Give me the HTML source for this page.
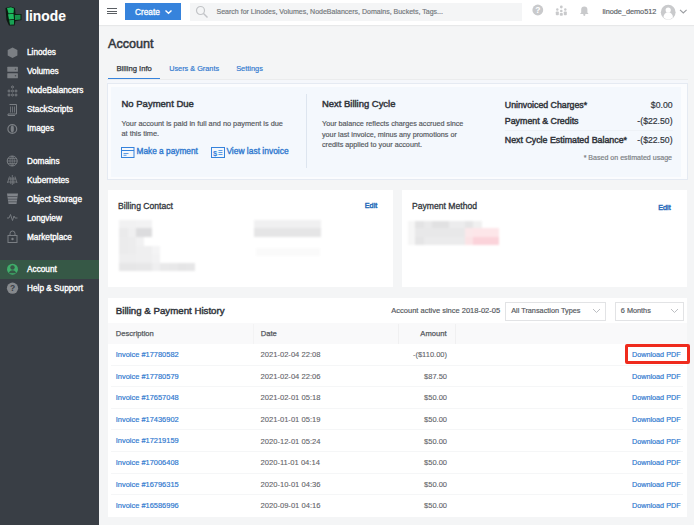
<!DOCTYPE html>
<html><head><meta charset="utf-8">
<style>
*{box-sizing:border-box;margin:0;padding:0}
html,body{width:694px;height:525px;overflow:hidden;background:#f4f5f6;font-family:"Liberation Sans",sans-serif;color:#32363c;position:relative}
.a{position:absolute}
.t{position:absolute;white-space:nowrap;line-height:1;-webkit-text-stroke-width:0.18px}
</style></head><body>
<!-- sidebar -->
<div class="a" style="left:0;top:0;width:99px;height:525px;background:#393e45"></div>
<svg class="a" style="left:0;top:0" width="24" height="28" viewBox="0 0 24 28">
  <path d="M5.5 8 L10.5 6.5 L15 8 L15.5 14 L21.5 14 L21.5 20 L15.5 21 L14.5 25.5 L9 25.5 L6.5 20 Z" fill="#0b1a10"/>
  <path d="M7 8 L11 7.2 L14 8.5 L13.5 13 L8.5 13.5 Z" fill="#1db35d"/>
  <path d="M8 14.2 L13.5 13.8 L14 19 L9 19.5 Z" fill="#1eb95f"/>
  <path d="M9.2 20.2 L14 19.8 L14 24.5 L10 24.8 Z" fill="#19a154"/>
  <path d="M14.8 15 L20.5 14.8 L20.5 19.5 L15 20 Z" fill="#168e4a"/>
</svg>
<div class="a" style="left:0;top:260px;width:99px;height:18.8px;background:#365846"></div>
<!-- sidebar icons -->
<svg class="a" style="left:0;top:40px" width="24" height="260" viewBox="0 40 24 260">
  <g fill="#7b7f84" stroke="none">
    <polygon points="12.5,47.5 17.4,50 17.4,55.5 12.5,58 7.7,55.5 7.7,50"/>
    <rect x="7.3" y="66.7" width="10.6" height="5" rx="0.5"/>
    <rect x="7.3" y="73.2" width="10.6" height="5" rx="0.5"/>
  </g>
  <g fill="#4a4e53"><circle cx="15.5" cy="69.2" r="0.8"/><circle cx="15.5" cy="75.7" r="0.8"/></g>
  <g fill="none" stroke="#7b7f84" stroke-width="1">
    <!-- nodebalancers -->
    <circle cx="12.5" cy="87" r="1"/><circle cx="9" cy="91" r="1"/><circle cx="12.5" cy="91" r="1"/><circle cx="16" cy="91" r="1"/>
    <circle cx="9" cy="95" r="1"/><circle cx="12.5" cy="95" r="1"/><circle cx="16" cy="95" r="1"/>
    <!-- stackscripts -->
    <path d="M9.5 104.5 h7 v9.5 h-8.5 v1.5 h7" />
    <path d="M10.5 106.5 v6 M12.5 106.5 v6 M14.5 106.5 v6" stroke-width="0.8"/>
    <!-- images -->
    <circle cx="12.3" cy="129" r="4.4" stroke-width="1.2"/>
    <ellipse cx="12.3" cy="129" rx="1.6" ry="3.4" fill="#7b7f84" stroke="none"/>
    <!-- domains -->
    <circle cx="12.2" cy="161" r="5"/>
    <path d="M7.2 161 h10 M12.2 156 v10 M8 158.5 h8.4 M8 163.5 h8.4" stroke-width="0.7"/>
    <path d="M12.2 156 c-3 3 -3 7 0 10 M12.2 156 c3 3 3 7 0 10" stroke-width="0.7"/>
    <!-- kubernetes -->
    <path d="M12.3 175 v10 M9.5 176.5 l-2 6.5 M15 176.5 l2 6.5 M8.5 179 h7.6 M7.5 182 h9.6 M10.8 177 v7 M13.8 177 v7" stroke-width="0.8"/>
    <!-- longview -->
    <path d="M7 218 h2 l1.5 -3.5 l2 6 l1.5 -4.5 l1 2 h2.5" stroke-width="0.9"/>
    <!-- marketplace -->
    <rect x="8" y="235.5" width="9" height="7" />
    <path d="M10 235.5 v-2 a2.5 2.5 0 0 1 5 0 v2"/>
  </g>
  <path d="M7 193.5 h11 l-1.5 10.5 h-8 z" fill="#80848a"/><path d="M7.5 196.5 h10 M7.8 199.2 h9.4 M8.2 201.8 h8.6" stroke="#393e45" stroke-width="0.6"/>
  <circle cx="12.5" cy="239" r="1.2" fill="#7b7f84"/>
  <!-- account -->
  <circle cx="12.5" cy="269.2" r="5.5" fill="#3fae6a"/>
  <circle cx="12.5" cy="267.5" r="2.2" fill="#365846"/>
  <path d="M8.8 273.2 a3.8 3.8 0 0 1 7.4 0 z" fill="#365846"/>
  <!-- help -->
  <circle cx="12.5" cy="288.2" r="5.6" fill="#86898d"/>
  <text x="12.5" y="291.4" font-size="8.5" font-weight="bold" text-anchor="middle" fill="#393e45" font-family="Liberation Sans">?</text>
</svg>

<!-- header -->
<div class="a" style="left:99px;top:0;width:595px;height:25px;background:#fff;box-shadow:0 1px 1px rgba(0,0,0,0.05)"></div>
<div class="a" style="left:107px;top:8px;width:10px;height:1.3px;background:#5a5e63"></div>
<div class="a" style="left:107px;top:10.6px;width:10px;height:1.3px;background:#5a5e63"></div>
<div class="a" style="left:107px;top:13.2px;width:10px;height:1.3px;background:#5a5e63"></div>
<div class="a" style="left:124.6px;top:3px;width:56.4px;height:17.3px;background:#3683dc"></div>
<svg class="a" style="left:164px;top:9px" width="9" height="6" viewBox="0 0 9 6"><path d="M1.5 1.5 L4.5 4.3 L7.5 1.5" fill="none" stroke="#fff" stroke-width="1.4"/></svg>
<div class="a" style="left:190px;top:3px;width:332px;height:18px;background:#f4f5f6"></div>
<svg class="a" style="left:195px;top:5px" width="14" height="14" viewBox="0 0 14 14"><circle cx="5.5" cy="5.5" r="4" fill="none" stroke="#c2c4c7" stroke-width="1.2"/><path d="M8.5 8.5 L12.5 12.5" stroke="#c2c4c7" stroke-width="1.4"/></svg>
<!-- header right icons -->
<svg class="a" style="left:528px;top:3px" width="166" height="20" viewBox="528 3 166 20">
  <circle cx="537.8" cy="10" r="5.4" fill="#c9cacc"/>
  <text x="537.9" y="13.2" font-size="8.5" font-weight="bold" text-anchor="middle" fill="#fff" font-family="Liberation Sans">?</text>
  <g fill="#c9cacc">
    <circle cx="561.3" cy="7" r="1.4"/>
    <circle cx="557.3" cy="9.5" r="1.2"/><circle cx="565.3" cy="9.5" r="1.2"/>
    <circle cx="561.3" cy="11" r="1.3"/>
    <rect x="555.8" y="11.5" width="3" height="3.8" rx="0.8"/><rect x="563.8" y="11.5" width="3" height="3.8" rx="0.8"/>
    <rect x="559.8" y="13" width="3" height="2.8" rx="0.8"/>
    <path d="M580 14 h8.6 l-1.2 -1.5 v-3 a3.1 3.1 0 0 0 -6.2 0 v3 z"/>
    <circle cx="584.3" cy="14.8" r="1.1"/>
  </g>
  <circle cx="668.2" cy="12.2" r="7.4" fill="#c9cacc"/>
  <circle cx="668.2" cy="10" r="2.6" fill="#fff"/>
  <path d="M663.5 17 a4.7 4.7 0 0 1 9.4 0 v0.5 a7.4 7.4 0 0 1 -9.4 0 z" fill="#fff"/>
  <path d="M680 9.8 L683.3 13 L686.6 9.8" fill="none" stroke="#9a9da1" stroke-width="1.1"/>
</svg>

<!-- tabs underline -->
<div class="a" style="left:108px;top:77.8px;width:52px;height:2px;background:#3683dc"></div>
<div class="a" style="left:107px;top:79px;width:581px;height:1px;background:#ebeced"></div><div class="a" style="left:107px;top:80px;width:581px;height:3px;background:#f5f7fb"></div>

<!-- summary panel -->
<div class="a" style="left:107px;top:83.2px;width:580.5px;height:96.8px;background:#fbfcfe;border:1.4px solid #e5eaf2"></div>
<div class="a" style="left:110.8px;top:87px;width:570.7px;height:90px;background:#f4f8fd"></div>
<div class="a" style="left:305.5px;top:94px;width:1px;height:74px;background:#dde5ef"></div>
<div class="a" style="left:505px;top:129.5px;width:168px;height:1px;background:#eef2f7"></div>
<svg class="a" style="left:120px;top:146px" width="16" height="13" viewBox="0 0 16 13">
  <rect x="1.5" y="1.5" width="12.5" height="10" fill="none" stroke="#3683dc" stroke-width="1"/>
  <path d="M1.5 4.5 h12.5" stroke="#3683dc" stroke-width="1"/>
  <path d="M3.5 7.5 h5 M3.5 9.3 h3" stroke="#3683dc" stroke-width="0.8"/>
</svg>
<svg class="a" style="left:210px;top:146px" width="16" height="13" viewBox="0 0 16 13">
  <rect x="1.5" y="1.5" width="13" height="10" fill="none" stroke="#3683dc" stroke-width="1"/>
  <text x="5" y="9.8" font-size="7.5" font-weight="bold" text-anchor="middle" fill="#3683dc" font-family="Liberation Sans">$</text>
  <path d="M8.5 4.5 h4 M8.5 6.5 h4 M8.5 8.5 h4" stroke="#3683dc" stroke-width="0.8"/>
</svg>

<!-- contact / payment panels -->
<div class="a" style="left:107.5px;top:190px;width:285.5px;height:96.5px;background:#fff"></div>
<div class="a" style="left:401.5px;top:190px;width:285.5px;height:96.5px;background:#fff"></div>
<!-- blurred contact -->
<div class="a" style="left:0;top:0;width:694px;height:525px;filter:blur(0.9px)">
<div class="a" style="left:118.5px;top:219.8px;width:9.9px;height:8.7px;background:#f1f1f2"></div>
<div class="a" style="left:128.2px;top:219.8px;width:8.0px;height:8.7px;background:#f1f1f2"></div>
<div class="a" style="left:136.0px;top:219.8px;width:8.0px;height:8.7px;background:#f2f2f3"></div>
<div class="a" style="left:143.8px;top:219.8px;width:8.6px;height:8.7px;background:#f2f2f3"></div>
<div class="a" style="left:118.5px;top:228.3px;width:9.9px;height:8.6px;background:#eaeaeb"></div>
<div class="a" style="left:128.2px;top:228.3px;width:8.0px;height:8.6px;background:#efeff0"></div>
<div class="a" style="left:136.0px;top:228.3px;width:8.0px;height:8.6px;background:#dcdcde"></div>
<div class="a" style="left:143.8px;top:228.3px;width:8.6px;height:8.6px;background:#dcdcde"></div>
<div class="a" style="left:118.5px;top:236.7px;width:9.9px;height:9.3px;background:#ebebec"></div>
<div class="a" style="left:128.2px;top:236.7px;width:8.0px;height:9.3px;background:#ececed"></div>
<div class="a" style="left:136.0px;top:236.7px;width:8.0px;height:9.3px;background:#f1f1f2"></div>
<div class="a" style="left:118.5px;top:245.8px;width:9.9px;height:8.6px;background:#ebebec"></div>
<div class="a" style="left:128.2px;top:245.8px;width:8.0px;height:8.6px;background:#ececed"></div>
<div class="a" style="left:136.0px;top:245.8px;width:8.0px;height:8.6px;background:#efeff0"></div>
<div class="a" style="left:143.8px;top:245.8px;width:8.6px;height:8.6px;background:#efeff0"></div>
<div class="a" style="left:152.2px;top:245.8px;width:8.0px;height:8.6px;background:#f4f4f5"></div>
<div class="a" style="left:118.5px;top:254.2px;width:9.9px;height:8.6px;background:#eeeeef"></div>
<div class="a" style="left:128.2px;top:254.2px;width:8.0px;height:8.6px;background:#eeeeef"></div>
<div class="a" style="left:136.0px;top:254.2px;width:8.0px;height:8.6px;background:#efeff0"></div>
<div class="a" style="left:143.8px;top:254.2px;width:8.6px;height:8.6px;background:#efeff0"></div>
<div class="a" style="left:152.2px;top:254.2px;width:8.0px;height:8.6px;background:#f2f2f3"></div>
<div class="a" style="left:118.5px;top:262.6px;width:9.9px;height:8.6px;background:#e6e6e7"></div>
<div class="a" style="left:128.2px;top:262.6px;width:8.0px;height:8.6px;background:#e6e6e7"></div>
<div class="a" style="left:136.0px;top:262.6px;width:8.0px;height:8.6px;background:#e7e7e8"></div>
<div class="a" style="left:143.8px;top:262.6px;width:8.6px;height:8.6px;background:#e7e7e8"></div>
<div class="a" style="left:152.2px;top:262.6px;width:8.0px;height:8.6px;background:#efeff0"></div>
<div class="a" style="left:160.0px;top:262.6px;width:9.2px;height:8.6px;background:#e9e9ea"></div>
<div class="a" style="left:169.0px;top:262.6px;width:8.7px;height:8.6px;background:#e8e8e9"></div>
<div class="a" style="left:177.5px;top:262.6px;width:8.7px;height:8.6px;background:#e5e5e6"></div>
<div class="a" style="left:186.0px;top:262.6px;width:9.2px;height:8.6px;background:#e6e6e7"></div>
<div class="a" style="left:254.4px;top:219.8px;width:67.0px;height:8.7px;background:#f0f0f1"></div>
<div class="a" style="left:254.4px;top:228.3px;width:67.0px;height:9.2px;background:#e5e5e6"></div>
<div class="a" style="left:256.4px;top:248.4px;width:63.8px;height:7.3px;background:#fafafa"></div>
<div class="a" style="left:408.0px;top:220.5px;width:7.0px;height:8.1px;background:#f6f6f6"></div>
<div class="a" style="left:414.8px;top:220.5px;width:8.9px;height:8.1px;background:#e3e3e4"></div>
<div class="a" style="left:423.5px;top:220.5px;width:8.7px;height:8.1px;background:#e9e9ea"></div>
<div class="a" style="left:432.0px;top:220.5px;width:8.2px;height:8.1px;background:#e1e1e2"></div>
<div class="a" style="left:440.0px;top:220.5px;width:8.9px;height:8.1px;background:#e1e1e2"></div>
<div class="a" style="left:448.7px;top:220.5px;width:8.8px;height:8.1px;background:#ececed"></div>
<div class="a" style="left:457.3px;top:220.5px;width:7.4px;height:8.1px;background:#ececed"></div>
<div class="a" style="left:464.5px;top:220.5px;width:8.9px;height:8.1px;background:#e5e5e6"></div>
<div class="a" style="left:473.2px;top:220.5px;width:8.8px;height:8.1px;background:#f0f0f0"></div>
<div class="a" style="left:408.0px;top:228.4px;width:7.0px;height:8.8px;background:#f6f6f6"></div>
<div class="a" style="left:414.8px;top:228.4px;width:8.9px;height:8.8px;background:#e8e8e9"></div>
<div class="a" style="left:423.5px;top:228.4px;width:8.7px;height:8.8px;background:#e8e8e9"></div>
<div class="a" style="left:432.0px;top:228.4px;width:8.2px;height:8.8px;background:#e8e8e9"></div>
<div class="a" style="left:440.0px;top:228.4px;width:8.9px;height:8.8px;background:#e8e8e9"></div>
<div class="a" style="left:448.7px;top:228.4px;width:8.8px;height:8.8px;background:#e8e8e9"></div>
<div class="a" style="left:457.3px;top:228.4px;width:7.4px;height:8.8px;background:#e8e8e9"></div>
<div class="a" style="left:464.5px;top:228.4px;width:8.9px;height:8.8px;background:#fbe8ea"></div>
<div class="a" style="left:473.2px;top:228.4px;width:8.8px;height:8.8px;background:#fde6e9"></div>
<div class="a" style="left:481.8px;top:228.4px;width:8.9px;height:8.8px;background:#fde6e9"></div>
<div class="a" style="left:490.5px;top:228.4px;width:8.2px;height:8.8px;background:#fde6e9"></div>
<div class="a" style="left:408.0px;top:237.0px;width:7.0px;height:8.2px;background:#f6f6f6"></div>
<div class="a" style="left:414.8px;top:237.0px;width:8.9px;height:8.2px;background:#e5e5e6"></div>
<div class="a" style="left:423.5px;top:237.0px;width:8.7px;height:8.2px;background:#ebebec"></div>
<div class="a" style="left:432.0px;top:237.0px;width:8.2px;height:8.2px;background:#ebebec"></div>
<div class="a" style="left:440.0px;top:237.0px;width:8.9px;height:8.2px;background:#ebebec"></div>
<div class="a" style="left:448.7px;top:237.0px;width:8.8px;height:8.2px;background:#ebebec"></div>
<div class="a" style="left:457.3px;top:237.0px;width:7.4px;height:8.2px;background:#ebebec"></div>
<div class="a" style="left:464.5px;top:237.0px;width:8.9px;height:8.2px;background:#fbe3e6"></div>
<div class="a" style="left:473.2px;top:237.0px;width:8.8px;height:8.2px;background:#fbd3da"></div>
<div class="a" style="left:481.8px;top:237.0px;width:8.9px;height:8.2px;background:#fbd3da"></div>
<div class="a" style="left:490.5px;top:237.0px;width:8.2px;height:8.2px;background:#fbd3da"></div>
</div>

<!-- history panel -->
<div class="a" style="left:107.5px;top:298px;width:579.5px;height:218.5px;background:#fff"></div>
<div class="a" style="left:505px;top:302px;width:101px;height:18.5px;border:1px solid #e2e3e5;background:#fff"></div>
<div class="a" style="left:615px;top:302px;width:69px;height:18.5px;border:1px solid #e2e3e5;background:#fff"></div>
<svg class="a" style="left:592px;top:307px" width="10" height="8" viewBox="0 0 10 8"><path d="M1 2 L4.5 5.5 L8 2" fill="none" stroke="#bcbec2" stroke-width="1"/></svg>
<svg class="a" style="left:669.5px;top:307px" width="10" height="8" viewBox="0 0 10 8"><path d="M1 2 L4.5 5.5 L8 2" fill="none" stroke="#bcbec2" stroke-width="1"/></svg>
<div class="a" style="left:107.5px;top:322.8px;width:579.5px;height:20.8px;background:#f9f9fa"></div>
<div class="a" style="left:252.5px;top:323.7px;width:1px;height:20px;background:#f3f3f4"></div>
<div class="a" style="left:397.5px;top:323.7px;width:1px;height:20px;background:#f0f0f1"></div>
<div class="a" style="left:455px;top:323.7px;width:1px;height:20px;background:#f0f0f1"></div>
<div class="a" style="left:111px;top:364.70px;width:572px;height:1px;background:#f5f6f7"></div><div class="a" style="left:111px;top:386.27px;width:572px;height:1px;background:#f5f6f7"></div><div class="a" style="left:111px;top:407.84px;width:572px;height:1px;background:#f5f6f7"></div><div class="a" style="left:111px;top:429.41px;width:572px;height:1px;background:#f5f6f7"></div><div class="a" style="left:111px;top:450.98px;width:572px;height:1px;background:#f5f6f7"></div><div class="a" style="left:111px;top:472.55px;width:572px;height:1px;background:#f5f6f7"></div><div class="a" style="left:111px;top:494.12px;width:572px;height:1px;background:#f5f6f7"></div><div class="a" style="left:625px;top:344.2px;width:64.5px;height:20px;border:3.4px solid #ef2b1d;border-radius:2px"></div>

<div class="t" style="top:9.62px;font-size:13.8px;color:#ffffff;font-weight:bold;left:25.20px;-webkit-text-stroke:0.1px #fff;">linode</div>
<div class="t" style="top:49.22px;font-size:8.25px;color:#ffffff;left:27.00px;-webkit-text-stroke:0.35px #fff;">Linodes</div>
<div class="t" style="top:68.32px;font-size:8.25px;color:#ffffff;left:27.00px;-webkit-text-stroke:0.35px #fff;">Volumes</div>
<div class="t" style="top:87.32px;font-size:8.25px;color:#ffffff;left:27.00px;-webkit-text-stroke:0.35px #fff;">NodeBalancers</div>
<div class="t" style="top:106.42px;font-size:8.25px;color:#ffffff;left:27.00px;-webkit-text-stroke:0.35px #fff;">StackScripts</div>
<div class="t" style="top:125.42px;font-size:8.25px;color:#ffffff;left:27.00px;-webkit-text-stroke:0.35px #fff;">Images</div>
<div class="t" style="top:157.52px;font-size:8.25px;color:#ffffff;left:27.00px;-webkit-text-stroke:0.35px #fff;">Domains</div>
<div class="t" style="top:176.52px;font-size:8.25px;color:#ffffff;left:27.00px;-webkit-text-stroke:0.35px #fff;">Kubernetes</div>
<div class="t" style="top:195.62px;font-size:8.25px;color:#ffffff;left:27.00px;-webkit-text-stroke:0.35px #fff;">Object Storage</div>
<div class="t" style="top:214.62px;font-size:8.25px;color:#ffffff;left:27.00px;-webkit-text-stroke:0.35px #fff;">Longview</div>
<div class="t" style="top:233.72px;font-size:8.25px;color:#ffffff;left:27.00px;-webkit-text-stroke:0.35px #fff;">Marketplace</div>
<div class="t" style="top:265.62px;font-size:8.25px;color:#ffffff;left:27.00px;-webkit-text-stroke:0.35px #fff;">Account</div>
<div class="t" style="top:284.82px;font-size:8.25px;color:#ffffff;left:27.00px;-webkit-text-stroke:0.35px #fff;">Help &amp; Support</div>
<div class="t" style="top:7.57px;font-size:8.3px;color:#ffffff;left:135.00px;-webkit-text-stroke:0.3px #fff;">Create</div>
<div class="t" style="top:7.95px;font-size:7.03px;color:#75797d;left:216.50px;">Search for Linodes, Volumes, NodeBalancers, Domains, Buckets, Tags...</div>
<div class="t" style="top:8.42px;font-size:7.3px;color:#606469;left:602.40px;">linode_demo512</div>
<div class="t" style="top:37.93px;font-size:12.6px;color:#32363c;left:108.00px;-webkit-text-stroke:0.5px #32363c;">Account</div>
<div class="t" style="top:64.72px;font-size:7.65px;color:#32363c;left:116.50px;-webkit-text-stroke:0.25px #32363c;">Billing Info</div>
<div class="t" style="top:64.82px;font-size:7.3px;color:#3079cf;left:169.20px;">Users &amp; Grants</div>
<div class="t" style="top:65.04px;font-size:7.4px;color:#3079cf;left:236.20px;">Settings</div>
<div class="t" style="top:99.26px;font-size:9.5px;color:#32363c;left:121.50px;-webkit-text-stroke:0.45px #32363c;">No Payment Due</div>
<div class="t" style="top:119.78px;font-size:7.35px;color:#55595e;left:121.50px;">Your account is paid in full and no payment is due</div>
<div class="t" style="top:130.48px;font-size:7.35px;color:#55595e;left:121.50px;">at this time.</div>
<div class="t" style="top:147.37px;font-size:8.3px;color:#3079cf;left:136.50px;-webkit-text-stroke:0.35px #3079cf;">Make a payment</div>
<div class="t" style="top:147.25px;font-size:8.45px;color:#3079cf;left:226.40px;-webkit-text-stroke:0.35px #3079cf;">View last invoice</div>
<div class="t" style="top:99.30px;font-size:9.45px;color:#32363c;left:322.00px;-webkit-text-stroke:0.45px #32363c;">Next Billing Cycle</div>
<div class="t" style="top:119.69px;font-size:7.22px;color:#55595e;left:322.00px;">Your balance reflects charges accrued since</div>
<div class="t" style="top:130.59px;font-size:7.22px;color:#55595e;left:322.00px;">your last invoice, minus any promotions or</div>
<div class="t" style="top:140.89px;font-size:7.22px;color:#55595e;left:322.00px;">credits applied to your account.</div>
<div class="t" style="top:100.88px;font-size:8.77px;color:#32363c;left:504.80px;-webkit-text-stroke:0.45px #32363c;">Uninvoiced Charges*</div>
<div class="t" style="top:116.90px;font-size:8.86px;color:#32363c;left:504.80px;-webkit-text-stroke:0.45px #32363c;">Payment &amp; Credits</div>
<div class="t" style="top:135.93px;font-size:8.83px;color:#32363c;left:504.80px;-webkit-text-stroke:0.45px #32363c;">Next Cycle Estimated Balance*</div>
<div class="t" style="top:100.94px;font-size:8.7px;color:#32363c;right:21.40px;">$0.00</div>
<div class="t" style="top:117.04px;font-size:8.7px;color:#32363c;right:21.40px;">-($22.50)</div>
<div class="t" style="top:136.04px;font-size:8.7px;color:#32363c;right:21.40px;">-($22.50)</div>
<div class="t" style="top:154.22px;font-size:7.07px;color:#7b7f84;right:22.00px;">* Based on estimated usage</div>
<div class="t" style="top:202.22px;font-size:8.6px;color:#32363c;left:118.00px;-webkit-text-stroke:0.3px #32363c;">Billing Contact</div>
<div class="t" style="top:201.82px;font-size:7.3px;color:#2a6dba;right:316.70px;-webkit-text-stroke:0.45px #2a6dba;">Edit</div>
<div class="t" style="top:202.22px;font-size:8.6px;color:#32363c;left:412.00px;-webkit-text-stroke:0.3px #32363c;">Payment Method</div>
<div class="t" style="top:203.52px;font-size:7.3px;color:#2a6dba;right:23.30px;-webkit-text-stroke:0.45px #2a6dba;">Edit</div>
<div class="t" style="top:305.99px;font-size:9.7px;color:#32363c;left:115.80px;-webkit-text-stroke:0.45px #32363c;">Billing &amp; Payment History</div>
<div class="t" style="top:307.15px;font-size:7.5px;color:#55595e;left:391.30px;">Account active since 2018-02-05</div>
<div class="t" style="top:307.22px;font-size:7.3px;color:#55595e;left:511.20px;">All Transaction Types</div>
<div class="t" style="top:307.22px;font-size:7.3px;color:#55595e;left:620.80px;">6 Months</div>
<div class="t" style="top:329.77px;font-size:7.6px;color:#55595e;left:115.80px;-webkit-text-stroke-width:0.25px;">Description</div>
<div class="t" style="top:329.77px;font-size:7.6px;color:#55595e;left:260.80px;-webkit-text-stroke-width:0.25px;">Date</div>
<div class="t" style="top:329.77px;font-size:7.6px;color:#55595e;right:247.50px;-webkit-text-stroke-width:0.25px;">Amount</div>
<div class="t" style="top:351.09px;font-size:7.45px;color:#3079cf;left:115.80px;">Invoice #17780582</div>
<div class="t" style="top:351.27px;font-size:7.6px;color:#5f6368;left:260.50px;-webkit-text-stroke-width:0.1px;">2021-02-04 22:08</div>
<div class="t" style="top:351.35px;font-size:7.5px;color:#5f6368;right:247.00px;-webkit-text-stroke-width:0.1px;">-($110.00)</div>
<div class="t" style="top:351.27px;font-size:7.24px;color:#3079cf;right:13.40px;">Download PDF</div>
<div class="t" style="top:372.66px;font-size:7.45px;color:#3079cf;left:115.80px;">Invoice #17780579</div>
<div class="t" style="top:372.84px;font-size:7.6px;color:#5f6368;left:260.50px;-webkit-text-stroke-width:0.1px;">2021-02-04 22:06</div>
<div class="t" style="top:372.92px;font-size:7.5px;color:#5f6368;right:247.00px;-webkit-text-stroke-width:0.1px;">$87.50</div>
<div class="t" style="top:372.84px;font-size:7.24px;color:#3079cf;right:13.40px;">Download PDF</div>
<div class="t" style="top:394.23px;font-size:7.45px;color:#3079cf;left:115.80px;">Invoice #17657048</div>
<div class="t" style="top:394.41px;font-size:7.6px;color:#5f6368;left:260.50px;-webkit-text-stroke-width:0.1px;">2021-02-01 05:18</div>
<div class="t" style="top:394.49px;font-size:7.5px;color:#5f6368;right:247.00px;-webkit-text-stroke-width:0.1px;">$50.00</div>
<div class="t" style="top:394.41px;font-size:7.24px;color:#3079cf;right:13.40px;">Download PDF</div>
<div class="t" style="top:415.80px;font-size:7.45px;color:#3079cf;left:115.80px;">Invoice #17436902</div>
<div class="t" style="top:415.98px;font-size:7.6px;color:#5f6368;left:260.50px;-webkit-text-stroke-width:0.1px;">2021-01-01 05:19</div>
<div class="t" style="top:416.06px;font-size:7.5px;color:#5f6368;right:247.00px;-webkit-text-stroke-width:0.1px;">$50.00</div>
<div class="t" style="top:415.98px;font-size:7.24px;color:#3079cf;right:13.40px;">Download PDF</div>
<div class="t" style="top:437.37px;font-size:7.45px;color:#3079cf;left:115.80px;">Invoice #17219159</div>
<div class="t" style="top:437.55px;font-size:7.6px;color:#5f6368;left:260.50px;-webkit-text-stroke-width:0.1px;">2020-12-01 05:24</div>
<div class="t" style="top:437.63px;font-size:7.5px;color:#5f6368;right:247.00px;-webkit-text-stroke-width:0.1px;">$50.00</div>
<div class="t" style="top:437.55px;font-size:7.24px;color:#3079cf;right:13.40px;">Download PDF</div>
<div class="t" style="top:458.94px;font-size:7.45px;color:#3079cf;left:115.80px;">Invoice #17006408</div>
<div class="t" style="top:459.12px;font-size:7.6px;color:#5f6368;left:260.50px;-webkit-text-stroke-width:0.1px;">2020-11-01 04:14</div>
<div class="t" style="top:459.20px;font-size:7.5px;color:#5f6368;right:247.00px;-webkit-text-stroke-width:0.1px;">$50.00</div>
<div class="t" style="top:459.12px;font-size:7.24px;color:#3079cf;right:13.40px;">Download PDF</div>
<div class="t" style="top:480.51px;font-size:7.45px;color:#3079cf;left:115.80px;">Invoice #16796315</div>
<div class="t" style="top:480.69px;font-size:7.6px;color:#5f6368;left:260.50px;-webkit-text-stroke-width:0.1px;">2020-10-01 04:36</div>
<div class="t" style="top:480.77px;font-size:7.5px;color:#5f6368;right:247.00px;-webkit-text-stroke-width:0.1px;">$50.00</div>
<div class="t" style="top:480.69px;font-size:7.24px;color:#3079cf;right:13.40px;">Download PDF</div>
<div class="t" style="top:502.08px;font-size:7.45px;color:#3079cf;left:115.80px;">Invoice #16586996</div>
<div class="t" style="top:502.26px;font-size:7.6px;color:#5f6368;left:260.50px;-webkit-text-stroke-width:0.1px;">2020-09-01 04:16</div>
<div class="t" style="top:502.34px;font-size:7.5px;color:#5f6368;right:247.00px;-webkit-text-stroke-width:0.1px;">$50.00</div>
<div class="t" style="top:502.26px;font-size:7.24px;color:#3079cf;right:13.40px;">Download PDF</div>
</body></html>
